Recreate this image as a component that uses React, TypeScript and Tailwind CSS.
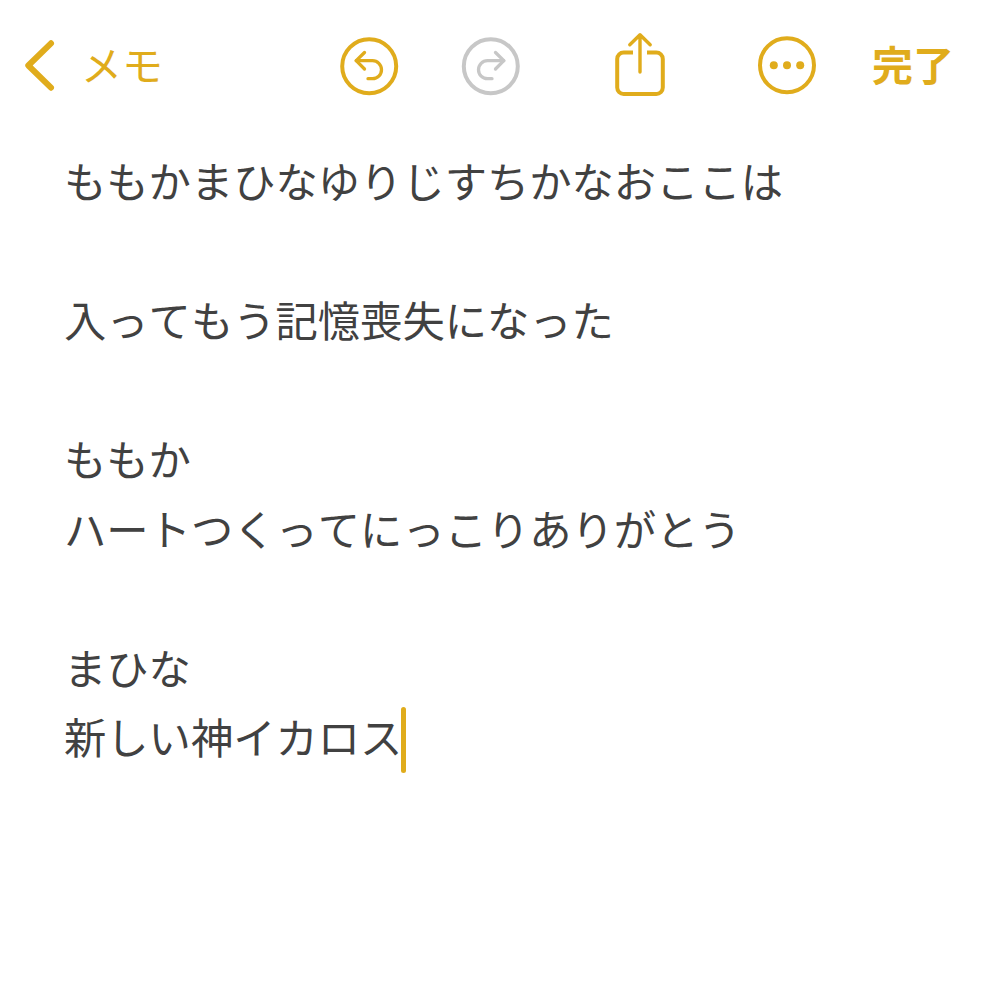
const lines = [
  'ももかまひなゆりじすちかなおここは',
  '',
  '入ってもう記憶喪失になった',
  '',
  'ももか',
  'ハートつくってにっこりありがとう',
  '',
  'まひな',
  '新しい神イカロス',
];

function BackIcon() {
  return (
    <svg className="ml-[24px] h-[54px] w-[32px] shrink-0" viewBox="0 0 32 54" fill="none" stroke="currentColor" strokeWidth="6" strokeLinecap="round" strokeLinejoin="round">
      <path d="M27 4.3L4.3 26.5L27 48.7" />
    </svg>
  );
}

function TurnIcon() {
  return (
    <svg className="h-[60px] w-[60px]" viewBox="0 0 60 60" fill="none" stroke="currentColor" strokeWidth="3.3" strokeLinecap="round" strokeLinejoin="round">
      <circle cx="30.2" cy="30.2" r="27" strokeWidth="4" />
      <path d="M25.5 16.5L17.2 24.7L25.5 33" />
      <path d="M17.2 24.7H33.5a9 9 0 0 1 0 18H29" />
    </svg>
  );
}

function ShareIcon() {
  return (
    <svg className="h-[68px] w-[54px]" viewBox="0 0 54 68" fill="none" stroke="currentColor" strokeWidth="4" strokeLinejoin="round">
      <path d="M20 20.5H10.7a6.5 6.5 0 0 0-6.5 6.5v28.5a6.5 6.5 0 0 0 6.5 6.5h32.6a6.5 6.5 0 0 0 6.5-6.5V27a6.5 6.5 0 0 0-6.5-6.5H34" />
      <path d="M27 40V3M16.8 12.7L27 2.7L37.2 12.7" strokeWidth="3.4" strokeLinecap="round" />
    </svg>
  );
}

function MoreIcon() {
  return (
    <svg className="h-[60px] w-[60px]" viewBox="0 0 60 60" fill="currentColor">
      <circle cx="30" cy="29.3" r="27" fill="none" stroke="currentColor" strokeWidth="4" />
      <circle cx="16.8" cy="29.3" r="4" />
      <circle cx="30" cy="29.3" r="4" />
      <circle cx="43.2" cy="29.3" r="4" />
    </svg>
  );
}

export default function App() {
  return (
    <main className="h-[1000px] w-[1000px] overflow-hidden bg-white font-['Noto_Sans_CJK_JP',sans-serif] text-[#414141] [font-kerning:none]">
      <header className="flex h-[132px] items-center text-[#e0ac1c]">
        <BackIcon />
        <span className="mb-[7px] ml-[25px] w-[83px] whitespace-nowrap text-[41px] leading-[60px]">メモ</span>
        <button className="ml-[175px]"><TurnIcon /></button>
        <button className="ml-[62px] -scale-x-100 text-[#c7c7c7]"><TurnIcon /></button>
        <button className="ml-[92px]"><ShareIcon /></button>
        <button className="ml-[90px]"><MoreIcon /></button>
        <span className="mb-[6px] ml-[55px] whitespace-nowrap text-[41px] font-bold leading-[60px]">完了</span>
      </header>
      <section className="pl-[64px] pt-[17px] text-[42.3px]">
        {lines.map((line, index) => (
          <p key={index} className="flex h-[69.5px] items-center whitespace-nowrap leading-[69.5px]">
            <span className="mb-[8px]">{line}</span>
            {index === lines.length - 1 && <span className="ml-[-1px] h-[66px] w-[5px] rounded-full bg-[#e0ac1c]" />}
          </p>
        ))}
      </section>
    </main>
  );
}
